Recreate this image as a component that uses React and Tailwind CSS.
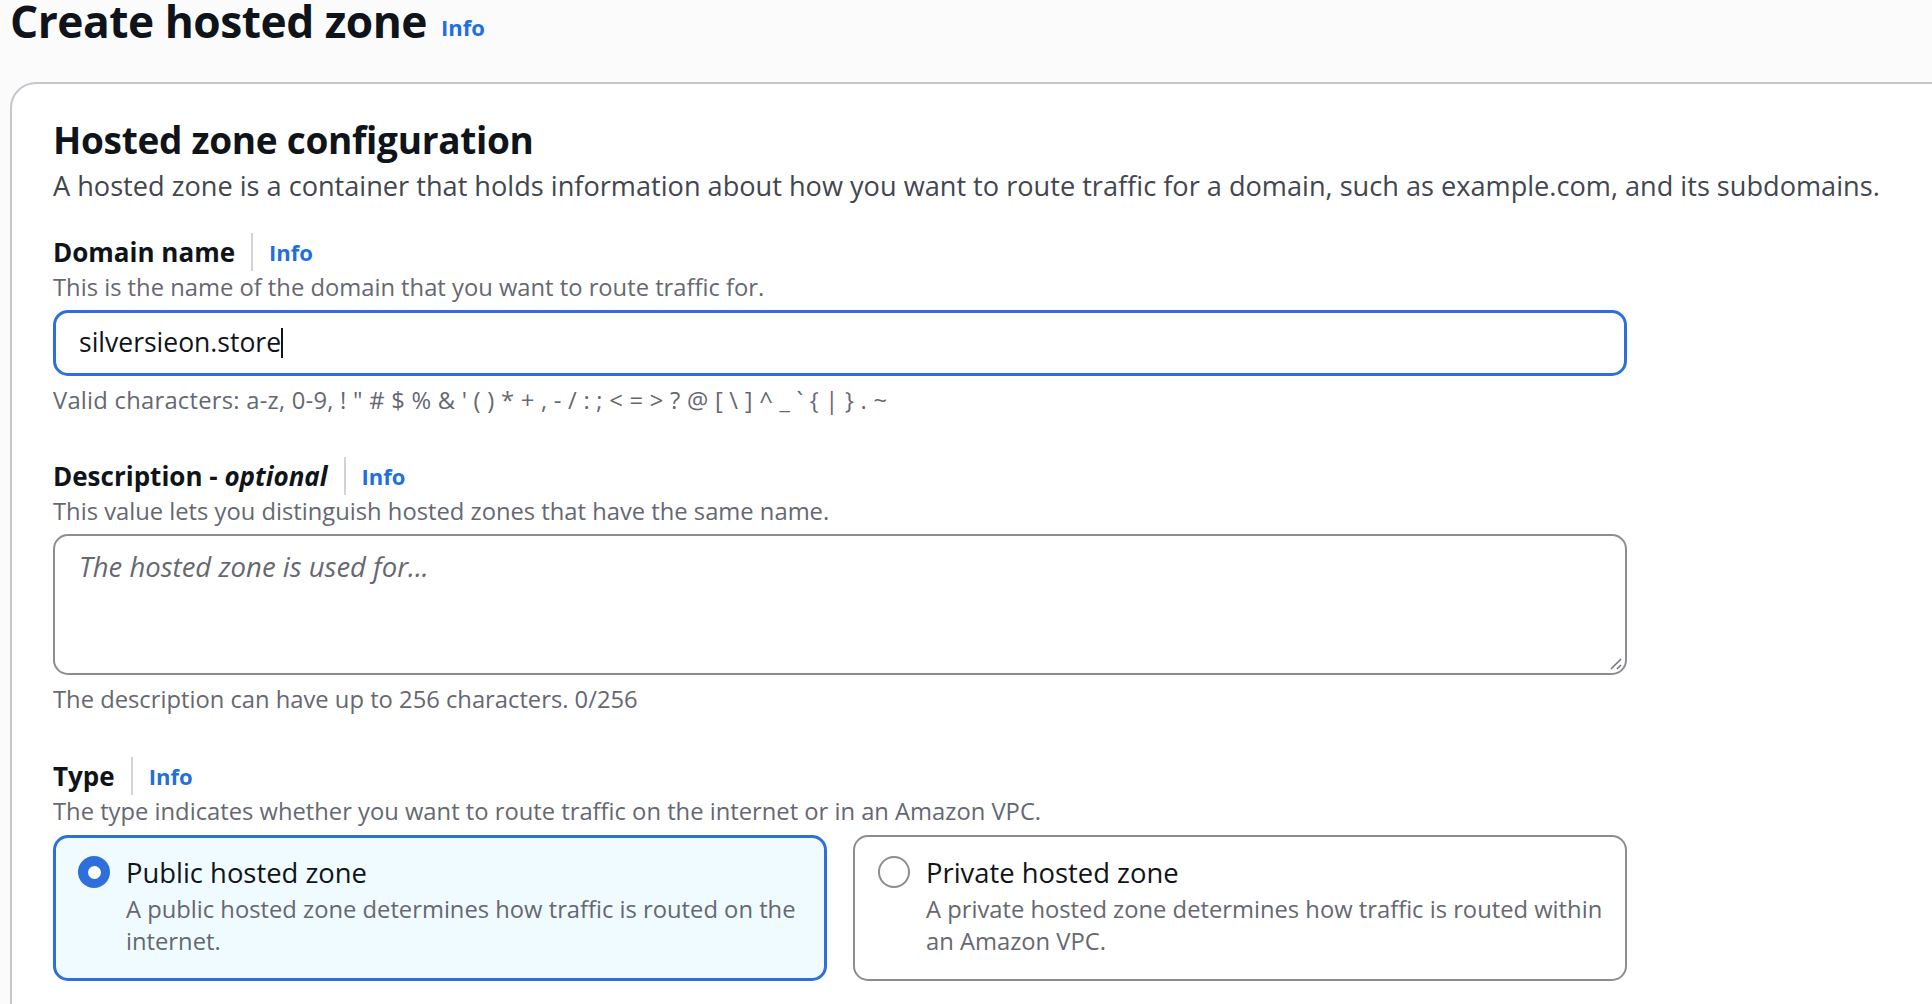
import React from 'react';

const font = { fontFamily: '"Open Sans", "Noto Sans", sans-serif' };

const Label = ({ children }) => (
    <div className="flex items-center h-[39px]">
        <span className="text-[26px] font-bold text-[#0f141a] leading-[36px]">{children}</span>
        <span className="mx-[16px] w-[2px] h-[38px] bg-[#d1d1d6]"></span>
        <a className="text-[22px] font-bold text-[#1f6fe0] leading-[36px]">Info</a>
    </div>
);

const Hint = ({ children, className = '' }) => (
    <p className={`text-[23.75px] leading-[32px] text-[#656871] ${className}`}>{children}</p>
);

const App = () => {
    return (
        <div className="w-[1932px] h-[1004px] overflow-hidden bg-[#fbfbfb]" style={font}>
            <div className="flex items-end pl-[10px] h-[58px] -mt-[8px]">
                <h1 className="text-[44.3px] font-bold text-[#0f141a] leading-[58px] tracking-[-0.5px]">Create hosted zone</h1>
                <a className="ml-[14px] mb-[8px] text-[22px] font-bold text-[#1f6fe0] leading-[30px]">Info</a>
            </div>

            <div className="mt-[32px] ml-[10px] w-[2000px] h-[1000px] bg-white border-2 border-[#c6c6cd] rounded-tl-[26px] pl-[41px] pt-[32px]">
                <h2 className="text-[37px] font-bold text-[#0f141a] leading-[48px] tracking-[-0.3px]">Hosted zone configuration</h2>
                <p className="mt-[4px] text-[27.15px] leading-[36px] text-[#424650]">
                    A hosted zone is a container that holds information about how you want to route traffic for a domain, such as example.com, and its subdomains.
                </p>

                <div className="w-[1574px] mt-[28px]">
                    <Label>Domain name</Label>
                    <Hint>This is the name of the domain that you want to route traffic for.</Hint>
                    <div className="mt-[7px] h-[66px] border-[3px] border-[#2f6fdc] rounded-[15px] flex items-center pl-[23px]">
                        <span className="text-[26.5px] text-[#0f141a]">silversieon.store</span>
                        <span className="w-[2px] h-[30px] bg-[#0f141a]"></span>
                    </div>
                    <Hint className="mt-[8px] tracking-[0.25px]">Valid characters: a-z, 0-9, ! " # $ % &amp; ' ( ) * + , - / : ; &lt; = &gt; ? @ [ \ ] ^ _ ` {'{'} | {'}'} . ~</Hint>

                    <div className="mt-[40px]">
                        <div className="flex items-center h-[39px]">
                            <span className="text-[26px] font-bold text-[#0f141a] leading-[36px]">Description - <i>optional</i></span>
                            <span className="mx-[16px] w-[2px] h-[38px] bg-[#d1d1d6]"></span>
                            <a className="text-[22px] font-bold text-[#1f6fe0] leading-[36px]">Info</a>
                        </div>
                        <Hint>This value lets you distinguish hosted zones that have the same name.</Hint>
                        <div className="relative mt-[7px] h-[141px] border-2 border-[#8c8c94] rounded-[15px] pl-[24px] pt-[10px]">
                            <span className="text-[27.5px] italic text-[#656871]">The hosted zone is used for...</span>
                            <svg className="absolute right-[3px] bottom-[3px]" width="14" height="14" viewBox="0 0 14 14">
                                <path d="M13 3 L3 13 M13 9 L9 13" stroke="#6f6f77" strokeWidth="1.5" />
                            </svg>
                        </div>
                        <Hint className="mt-[8px]">The description can have up to 256 characters. 0/256</Hint>
                    </div>

                    <div className="mt-[41px]">
                        <Label>Type</Label>
                        <Hint>The type indicates whether you want to route traffic on the internet or in an Amazon VPC.</Hint>
                        <div className="mt-[8px] grid grid-cols-2 gap-[26px]">
                            <div className="h-[146px] border-[3px] border-[#2f6fdc] bg-[#f0fbff] rounded-[15px] flex pl-[22px] pt-[18px] pr-[8px]">
                                <span className="w-[32px] h-[32px] rounded-full bg-[#2f6fdc] flex items-center justify-center shrink-0">
                                    <span className="w-[13px] h-[13px] rounded-full bg-white"></span>
                                </span>
                                <div className="ml-[16px]">
                                    <div className="text-[27.4px] leading-[34px] text-[#0f141a]">Public hosted zone</div>
                                    <div className="mt-[3px] text-[23.75px] leading-[32px] text-[#656871]">A public hosted zone determines how traffic is routed on the internet.</div>
                                </div>
                            </div>
                            <div className="h-[146px] border-2 border-[#8c8c94] bg-white rounded-[15px] flex pl-[23px] pt-[19px] pr-[8px]">
                                <span className="w-[32px] h-[32px] rounded-full border-2 border-[#8c8c94] shrink-0"></span>
                                <div className="ml-[16px]">
                                    <div className="text-[27.4px] leading-[34px] text-[#0f141a]">Private hosted zone</div>
                                    <div className="mt-[3px] text-[23.75px] leading-[32px] text-[#656871]">A private hosted zone determines how traffic is routed within an Amazon VPC.</div>
                                </div>
                            </div>
                        </div>
                    </div>
                </div>
            </div>
        </div>
    );
};

export default App;
